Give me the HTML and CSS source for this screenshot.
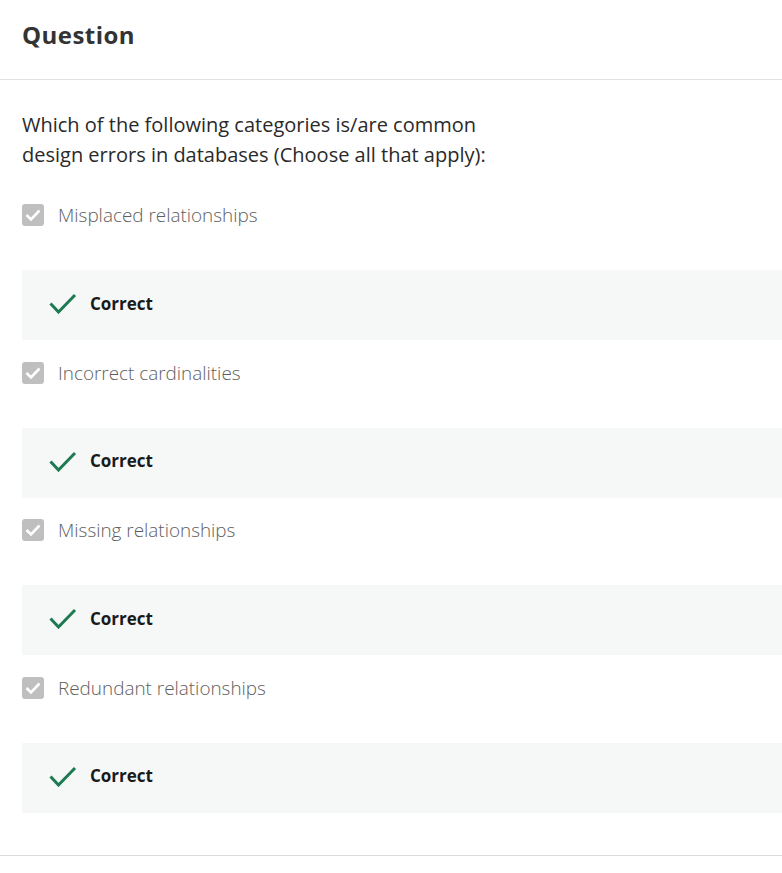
FILE: index.html
```html
<!DOCTYPE html>
<html>
<head>
<meta charset="utf-8">
<link rel="stylesheet" href="styles.css">
</head>
<body>
<div class="page">
  <header class="header"><h1 class="title">Question</h1></header>
  <main class="content">
    <p class="prompt">Which of the following categories is/are common<br>design errors in databases (Choose all that apply):</p>
    <div class="option">
      <span class="box"><svg width="22" height="22" viewBox="0 0 22 22"><path d="M4.5 11l4.5 4.5 8.5-9" fill="none" stroke="#fff" stroke-width="2.6"/></svg></span>
      <span class="label">Misplaced relationships</span>
    </div>
    <div class="feedback">
      <svg class="tick" width="28" height="22" viewBox="0 0 28 22"><path d="M1.5 11.5l8 8.5 16.5-17" fill="none" stroke="#1d7a52" stroke-width="3"/></svg>
      <span class="fb-text">Correct</span>
    </div>
    <div class="option">
      <span class="box"><svg width="22" height="22" viewBox="0 0 22 22"><path d="M4.5 11l4.5 4.5 8.5-9" fill="none" stroke="#fff" stroke-width="2.6"/></svg></span>
      <span class="label">Incorrect cardinalities</span>
    </div>
    <div class="feedback">
      <svg class="tick" width="28" height="22" viewBox="0 0 28 22"><path d="M1.5 11.5l8 8.5 16.5-17" fill="none" stroke="#1d7a52" stroke-width="3"/></svg>
      <span class="fb-text">Correct</span>
    </div>
    <div class="option">
      <span class="box"><svg width="22" height="22" viewBox="0 0 22 22"><path d="M4.5 11l4.5 4.5 8.5-9" fill="none" stroke="#fff" stroke-width="2.6"/></svg></span>
      <span class="label">Missing relationships</span>
    </div>
    <div class="feedback">
      <svg class="tick" width="28" height="22" viewBox="0 0 28 22"><path d="M1.5 11.5l8 8.5 16.5-17" fill="none" stroke="#1d7a52" stroke-width="3"/></svg>
      <span class="fb-text">Correct</span>
    </div>
    <div class="option">
      <span class="box"><svg width="22" height="22" viewBox="0 0 22 22"><path d="M4.5 11l4.5 4.5 8.5-9" fill="none" stroke="#fff" stroke-width="2.6"/></svg></span>
      <span class="label">Redundant relationships</span>
    </div>
    <div class="feedback">
      <svg class="tick" width="28" height="22" viewBox="0 0 28 22"><path d="M1.5 11.5l8 8.5 16.5-17" fill="none" stroke="#1d7a52" stroke-width="3"/></svg>
      <span class="fb-text">Correct</span>
    </div>
  </main>
</div>
</body>
</html>
```
FILE: styles.css
```css
* { box-sizing: border-box; }
html, body { margin: 0; padding: 0; background: #fff; }
body { font-family: "Open Sans", "Noto Sans", sans-serif; color: #1f1f1f; }
.page { width: 782px; }
.header {
  height: 80px;
  border-bottom: 1px solid #e1e1e1;
  padding: 0 22px;
  display: flex;
  align-items: center;
}
.title {
  margin: 0;
  margin-top: -11px;
  font-size: 24px;
  font-weight: 700;
  color: #333;
  letter-spacing: 0.45px;
}
.content {
  padding: 30px 0 42px 22px;
  border-bottom: 1px solid #dcdcdc;
}
.prompt {
  margin: 0 0 34px 0;
  font-size: 20px;
  line-height: 30px;
  color: #2a2a2a;
  font-weight: 400;
}
.option {
  display: flex;
  align-items: center;
  height: 22px;
  gap: 14px;
}
.box {
  width: 22px;
  height: 22px;
  border-radius: 3px;
  background: #bfbfbf;
  display: flex;
}
.label {
  font-size: 18.9px;
  color: #5e5e5e;
  font-weight: 300;
}
.feedback {
  margin: 44px 0 21.5px 0;
  height: 70px;
  background: #f5f8f7;
  display: flex;
  align-items: center;
  padding-left: 27px;
  padding-bottom: 4px;
}
.feedback:last-child { margin-bottom: 0; }
.fb-text {
  margin-left: 13px;
  font-size: 17px;
  font-weight: 700;
  color: #1a1a1a;
}
```
